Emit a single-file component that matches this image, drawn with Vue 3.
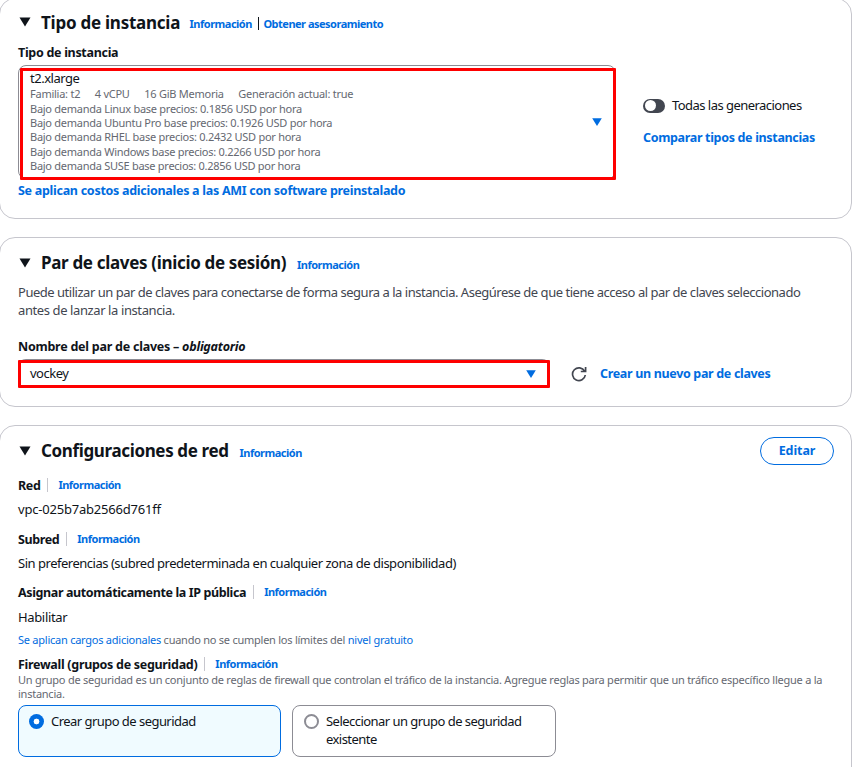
<script setup>
const prices = [
  ['Linux', '0.1856'],
  ['Ubuntu Pro', '0.1926'],
  ['RHEL', '0.2432'],
  ['Windows', '0.2266'],
  ['SUSE', '0.2856'],
]
</script>

<template>
  <main class="page">
    <section class="card type-card">
      <header class="head">
        <svg class="caret" viewBox="0 0 12 10"><path d="M0.5 0.5H11.5L6 9.5Z" /></svg>
        <h2 class="t-type">Tipo de instancia</h2>
        <a class="info">Información</a><span class="bar"></span><a class="info advice">Obtener asesoramiento</a>
      </header>
      <div class="label l-type">Tipo de instancia</div>
      <div class="type-row">
        <div class="select type-select">
          <div class="mark type-mark">
            <div class="options">
              <div class="value t2">t2.xlarge</div>
              <div class="specs"><span>Familia: t2</span><span>4 vCPU</span><span>16 GiB Memoria</span><span>Generación actual: true</span></div>
              <div v-for="p in prices" :key="p[0]" class="price">Bajo demanda {{ p[0] }} base precios: {{ p[1] }} USD por hora</div>
            </div>
            <svg class="drop" viewBox="0 0 10 8"><path d="M0.2 0.2H9.8L5 7.9Z" /></svg>
          </div>
        </div>
        <div class="side">
          <div class="toggle-row"><span class="toggle"><i></i></span><span class="value gens">Todas las generaciones</span></div>
          <a class="link compare">Comparar tipos de instancias</a>
        </div>
      </div>
      <a class="link costs">Se aplican costos adicionales a las AMI con software preinstalado</a>
    </section>

    <section class="card key-card">
      <header class="head">
        <svg class="caret" viewBox="0 0 12 10"><path d="M0.5 0.5H11.5L6 9.5Z" /></svg>
        <h2 class="t-key">Par de claves (inicio de sesión)</h2>
        <a class="info">Información</a>
      </header>
      <p class="intro">Puede utilizar un par de claves para conectarse de forma segura a la instancia. Asegúrese de que tiene acceso al par de claves seleccionado<br /><span class="intro-end">antes de lanzar la instancia.</span></p>
      <div class="label l-key">Nombre del par de claves – <em>obligatorio</em></div>
      <div class="key-row">
        <div class="select key-select">
          <div class="mark key-mark">
            <span class="value vockey">vockey</span>
            <svg class="drop" viewBox="0 0 10 8"><path d="M0.2 0.2H9.8L5 7.9Z" /></svg>
          </div>
        </div>
        <svg class="refresh" viewBox="0 0 16 16"><path d="M14.3 9A6.4 6.4 0 1 1 13.6 5.2M14.6 1V5.5H9.8" /></svg>
        <a class="link create">Crear un nuevo par de claves</a>
      </div>
    </section>

    <section class="card net-card">
      <header class="head">
        <svg class="caret" viewBox="0 0 12 10"><path d="M0.5 0.5H11.5L6 9.5Z" /></svg>
        <h2 class="t-net">Configuraciones de red</h2>
        <a class="info">Información</a>
        <button class="edit">Editar</button>
      </header>
      <div class="field f-red"><span class="label">Red</span><a class="info">Información</a></div>
      <div class="value v-red">vpc-025b7ab2566d761ff</div>
      <div class="field f-sub"><span class="label">Subred</span><a class="info">Información</a></div>
      <div class="value v-sub">Sin preferencias (subred predeterminada en cualquier zona de disponibilidad)</div>
      <div class="field f-ip"><span class="label">Asignar automáticamente la IP pública</span><a class="info">Información</a></div>
      <div class="value v-ip">Habilitar</div>
      <div class="small charges"><a>Se aplican cargos adicionales</a> cuando no se cumplen los límites del <a>nivel gratuito</a></div>
      <div class="field f-fw"><span class="label">Firewall (grupos de seguridad)</span><a class="info">Información</a></div>
      <div class="small fw-text">Un grupo de seguridad es un conjunto de reglas de firewall que controlan el tráfico de la instancia. Agregue reglas para permitir que un tráfico específico llegue a la<br />instancia.</div>
      <div class="tiles">
        <div class="tile on"><span class="radio"></span><span class="value tile-text">Crear grupo de seguridad</span></div>
        <div class="tile"><span class="radio"></span><span class="value tile-text">Seleccionar un grupo de seguridad<br />existente</span></div>
      </div>
    </section>
  </main>
</template>

<style>
body { background: #fff; overflow: hidden; }
</style>

<style scoped>
* { box-sizing: border-box; }
.page {
  width: 852px; height: 767px; overflow: hidden;
  font-family: "Noto Sans", "Open Sans", sans-serif;
  font-size: 13px; color: #0f141a; white-space: nowrap;
}
.card {
  width: 853px; margin: 0 0 18px -1px; padding: 0 18px;
  border: 1px solid #c6c6cd; border-radius: 16px; background: #fff;
}
.type-card { height: 221px; margin-top: -2px; }
.key-card { height: 170px; }
.net-card { height: 370px; }
.head { display: flex; align-items: center; height: 28px; margin-right: -1px; }
.type-card .head { margin-top: 9px; }
.key-card .head, .net-card .head { margin-top: 11px; }
.caret { width: 12px; height: 10px; margin: 0 10px 0 1px; fill: #0f141a; }
h2 { margin: 0; font-size: 17px; line-height: 24px; font-weight: 700; }
.type-card h2 { margin-top: 1px; }
.t-type { width: 148.6px; letter-spacing: -0.25px; }
.t-key { width: 256px; letter-spacing: -0.33px; }
.t-net { width: 198.5px; letter-spacing: -0.36px; }
.info { font-size: 11px; line-height: 16px; font-weight: 700; color: #006ce0; letter-spacing: -0.5px; }
.head .info { margin-top: 4px; }
.bar { width: 1.5px; height: 13px; margin: 2px 4px 0 6px; background: #0f141a; }
.label { font-size: 12.5px; font-weight: 700; line-height: 18px; letter-spacing: -0.38px; }
.value { line-height: 18px; color: #0f141a; letter-spacing: -0.48px; }
.link { font-size: 12.5px; font-weight: 700; line-height: 18px; color: #006ce0; letter-spacing: -0.33px; }
.l-type { margin-top: 8px; letter-spacing: -0.3px; }
.type-row { display: flex; margin-top: 3px; }
.select { border: 1px solid #8c8c94; border-radius: 8px; }
.type-select { width: 598px; height: 114px; padding: 2px 0 0 1px; }
.mark { display: flex; justify-content: space-between; align-items: center; border: 3px solid #fe0000; border-radius: 1px; }
.type-mark { width: 596px; height: 112px; padding: 0 11px 0 7px; }
.type-mark .drop { margin-top: -4px; }
.options { height: 106px; }
.t2 { height: 15px; line-height: 15px; }
.specs { display: flex; gap: 14.6px; height: 15.5px; font-size: 11px; line-height: 15px; color: #656871; letter-spacing: -0.25px; }
.price { height: 14.4px; font-size: 11px; line-height: 14.4px; color: #656871; letter-spacing: -0.27px; }
.drop { width: 10px; height: 8px; fill: #006ce0; }
.side { margin: 31px 0 0 27px; }
.toggle-row { display: flex; align-items: center; gap: 7px; height: 18px; }
.toggle { width: 22px; height: 14px; margin-top: 1px; padding: 1px 2px; border-radius: 7px; background: #424650; }
.toggle i { display: block; width: 11px; height: 11px; border-radius: 6px; background: #fff; }
.gens { letter-spacing: -0.54px; }
.compare { display: block; margin-top: 15px; }
.costs { display: block; margin-top: 3px; letter-spacing: -0.28px; }
.intro { margin: 6px 0 0; line-height: 18px; color: #424650; letter-spacing: -0.48px; }
.intro-end { letter-spacing: -0.4px; }
.l-key { margin-top: 19px; letter-spacing: -0.24px; }
.key-row { display: flex; align-items: center; height: 29px; margin-top: 3px; }
.key-select { width: 532px; height: 29px; border-width: 1px 0 0; }
.key-mark { width: 532px; height: 28px; padding: 0 11px 0 9px; }
.vockey { margin-top: -2px; }
.refresh { width: 16px; height: 16px; margin: 0 13px 0 21px; fill: none; stroke: #424650; stroke-width: 1.7; }
.create { margin-top: 0; }
.edit {
  width: 74px; height: 28px; margin-left: auto; padding: 0;
  border: 1px solid #006ce0; border-radius: 14px; background: #fff;
  font: 700 12.5px/18px "Noto Sans", sans-serif; letter-spacing: -0.1px; color: #006ce0;
}
.field { display: flex; align-items: center; height: 18px; }
.field .label { margin-top: 1px; }
.field .info { margin-left: 7px; padding-left: 10px; height: 14px; line-height: 13px; border-left: 1px solid #c6c6cd; }
.f-red { margin-top: 11px; }
.v-red { margin-top: 6px; letter-spacing: -0.2px; }
.f-sub { margin-top: 12px; }
.v-sub { margin-top: 6px; }
.f-ip { margin-top: 11px; }
.v-ip { margin-top: 7px; letter-spacing: -0.35px; }
.small { font-size: 11px; line-height: 14px; color: #656871; letter-spacing: -0.245px; }
.small a { color: #006ce0; }
.charges { margin-top: 7px; }
.f-fw { margin-top: 8px; }
.f-fw .label { letter-spacing: -0.3px; }
.tiles { display: flex; gap: 11px; margin-top: 4px; }
.tile { display: flex; width: 264px; height: 52px; padding: 7px 10px; border: 1px solid #8c8c94; border-radius: 8px; }
.tile.on { width: 263px; border-color: #006ce0; background: #f0fbff; }
.tile-text { margin-top: -1px; letter-spacing: -0.54px; }
.radio { width: 15px; height: 15px; margin: 1px 7px 0 1px; border: 2px solid #8c8c94; border-radius: 50%; background: #fff; }
.on .radio {
  margin-left: 0; border: 0;
  background: radial-gradient(circle, #fff 2.6px, #006ce0 3.2px);
}
</style>
